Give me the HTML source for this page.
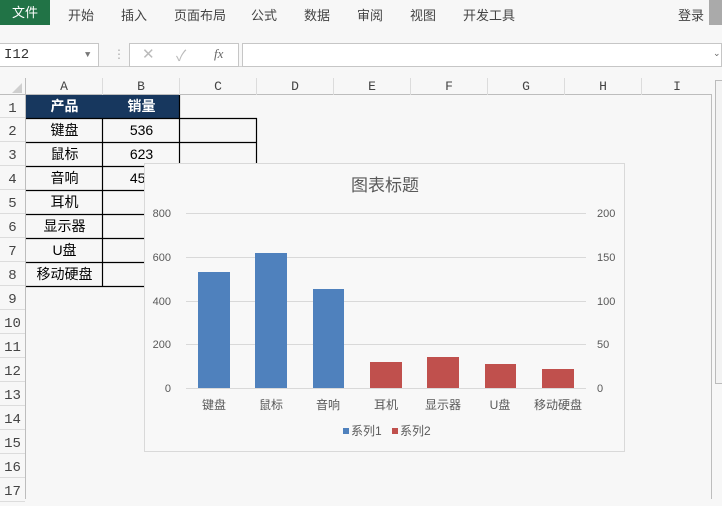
<!DOCTYPE html>
<html><head><meta charset="utf-8"><style>
*{margin:0;padding:0;box-sizing:border-box}
body{width:722px;height:499px;overflow:hidden;background:#f7f7f7;position:relative;font-family:"Liberation Sans","Noto Sans CJK SC",sans-serif;color:#333}
.a{position:absolute}
.tab{position:absolute;top:5px;font-size:13px;color:#444}
.ch{position:absolute;top:78px;height:17px;font:13px "Liberation Mono","Noto Sans CJK SC",monospace;color:#444;text-align:center;border-right:1px solid #dcdcdc;line-height:17px}
.rh{position:absolute;left:0;width:25px;height:24px;font:14px "Liberation Mono",monospace;color:#444;text-align:center;line-height:28px;border-bottom:1px solid #dcdcdc}
.c{position:absolute;height:24px;line-height:24px;text-align:center;font-size:14px;color:#000;font-family:"Liberation Sans","Noto Sans CJK SC",sans-serif}
</style></head><body>
<div class="a" style="left:0;top:0;width:50px;height:25px;background:#217346;color:#fff;font-size:13px;text-align:center;line-height:25px">文件</div>
<div class="tab" style="left:68px">开始</div>
<div class="tab" style="left:121px">插入</div>
<div class="tab" style="left:174px">页面布局</div>
<div class="tab" style="left:251px">公式</div>
<div class="tab" style="left:304px">数据</div>
<div class="tab" style="left:357px">审阅</div>
<div class="tab" style="left:410px">视图</div>
<div class="tab" style="left:463px">开发工具</div>
<div class="tab" style="left:678px">登录</div>
<div class="a" style="left:709px;top:0;width:13px;height:25px;background:#aaa"></div>
<!-- formula bar -->
<div class="a" style="left:0;top:43px;width:722px;height:24px;border-bottom:1px solid #d0d0d0"></div>
<div class="a" style="left:0;top:43px;width:99px;height:24px;border:1px solid #c6c6c6;border-left:none;background:#fff;font:14px 'Liberation Mono',monospace;line-height:22px;padding-left:4px">I12<span style="position:absolute;left:85px;top:0;font-size:9px;color:#777">▼</span></div>
<div class="a" style="left:113px;top:47px;color:#aaa;font-size:12px">⋮</div>
<div class="a" style="left:129px;top:43px;width:110px;height:24px;border:1px solid #c6c6c6;background:#fff"></div>
<div class="a" style="left:142px;top:45px;color:#bbb;font-size:15px">✕</div>
<div class="a" style="left:176px;top:45px;color:#bbb;font-size:15px">✓</div>
<div class="a" style="left:214px;top:46px;color:#666;font:italic 13px 'Liberation Serif',serif">fx</div>
<div class="a" style="left:242px;top:43px;width:480px;height:24px;border:1px solid #c6c6c6;background:#fff"></div>
<div class="a" style="left:713px;top:48px;color:#666;font-size:9px">⌄</div>
<!-- column headers -->
<div class="a" style="left:0;top:94px;width:711px;height:1px;background:#bdbdbd"></div>
<div class="a" style="left:25px;top:78px;width:1px;height:421px;background:#bdbdbd"></div>
<div class="a" style="left:12px;top:83px;width:0;height:0;border-left:10px solid transparent;border-bottom:10px solid #cfcfcf"></div>
<div class="ch" style="left:26px;width:77px">A</div>
<div class="ch" style="left:103px;width:77px">B</div>
<div class="ch" style="left:180px;width:77px">C</div>
<div class="ch" style="left:257px;width:77px">D</div>
<div class="ch" style="left:334px;width:77px">E</div>
<div class="ch" style="left:411px;width:77px">F</div>
<div class="ch" style="left:488px;width:77px">G</div>
<div class="ch" style="left:565px;width:77px">H</div>
<div class="ch" style="left:642px;width:70px;border:none">I</div>
<div class="a" style="left:711px;top:94px;width:1px;height:405px;background:#bdbdbd"></div>
<div class="a" style="left:715px;top:80px;width:7px;height:304px;border:1px solid #bbb;border-right:none;background:#f3f3f3"></div>
<!-- row headers -->
<div class="rh" style="top:95px;height:23px">1</div>
<div class="rh" style="top:118px">2</div>
<div class="rh" style="top:142px">3</div>
<div class="rh" style="top:166px">4</div>
<div class="rh" style="top:190px">5</div>
<div class="rh" style="top:214px">6</div>
<div class="rh" style="top:238px">7</div>
<div class="rh" style="top:262px">8</div>
<div class="rh" style="top:286px">9</div>
<div class="rh" style="top:310px">10</div>
<div class="rh" style="top:334px">11</div>
<div class="rh" style="top:358px">12</div>
<div class="rh" style="top:382px">13</div>
<div class="rh" style="top:406px">14</div>
<div class="rh" style="top:430px">15</div>
<div class="rh" style="top:454px">16</div>
<div class="rh" style="top:478px">17</div>
<!-- table -->
<div class="a" style="left:26px;top:95px;width:154px;height:23px;background:#17375e"></div>
<div class="c" style="left:26px;top:95px;width:77px;height:23px;line-height:23px;color:#fff;font-weight:bold">产品</div>
<div class="c" style="left:103px;top:95px;width:77px;height:23px;line-height:23px;color:#fff;font-weight:bold">销量</div>
<svg class="a" style="left:0;top:0" width="722" height="499">
<g stroke="#000" stroke-width="1.2" fill="none">
<path d="M26 142.5H257M26 166.5H257M26 190.5H257M26 214.5H180M26 238.5H180M26 262.5H180M26 286.5H180M26 118.5H257"/>
<path d="M102.5 118V286M179.5 95V286M256.5 118V166"/>
</g></svg>
<div class="c" style="left:26px;top:118px;width:77px">键盘</div><div class="c" style="left:103px;top:118px;width:77px">536</div>
<div class="c" style="left:26px;top:142px;width:77px">鼠标</div><div class="c" style="left:103px;top:142px;width:77px">623</div>
<div class="c" style="left:26px;top:166px;width:77px">音响</div><div class="c" style="left:103px;top:166px;width:77px">457</div>
<div class="c" style="left:26px;top:190px;width:77px">耳机</div>
<div class="c" style="left:26px;top:214px;width:77px">显示器</div>
<div class="c" style="left:26px;top:238px;width:77px">U盘</div>
<div class="c" style="left:26px;top:262px;width:77px">移动硬盘</div>
<!-- chart -->
<svg class="a" style="left:0;top:0" width="722" height="499" font-family="Liberation Sans,Noto Sans CJK SC,sans-serif">
<rect x="144.5" y="163.5" width="480" height="288" fill="#f8f8f8" stroke="#d9d9d9"/>
<text x="385" y="191" font-size="17" fill="#595959" text-anchor="middle">图表标题</text>
<g stroke="#d9d9d9"><path d="M186 213.5H586M186 257.5H586M186 301.5H586M186 344.5H586M186 388.5H586"/></g>
<g font-size="11" fill="#595959" text-anchor="end">
<text x="171" y="217">800</text><text x="171" y="261">600</text><text x="171" y="305">400</text><text x="171" y="348">200</text><text x="171" y="392">0</text></g>
<g font-size="11" fill="#595959">
<text x="597" y="217">200</text><text x="597" y="261">150</text><text x="597" y="305">100</text><text x="597" y="348">50</text><text x="597" y="392">0</text></g>
<g fill="#4f81bd"><rect x="198" y="272" width="32" height="116"/><rect x="255" y="253" width="32" height="135"/><rect x="313" y="289" width="31" height="99"/></g>
<g fill="#c0504d"><rect x="370" y="362" width="32" height="26"/><rect x="427" y="357" width="32" height="31"/><rect x="485" y="364" width="31" height="24"/><rect x="542" y="369" width="32" height="19"/></g>
<g font-size="12" fill="#595959" text-anchor="middle">
<text x="214" y="409">键盘</text><text x="271" y="409">鼠标</text><text x="328" y="409">音响</text><text x="386" y="409">耳机</text><text x="443" y="409">显示器</text><text x="500" y="409">U盘</text><text x="558" y="409">移动硬盘</text></g>
<rect x="343" y="428" width="6" height="6" fill="#4f81bd"/><text x="351" y="435" font-size="12" fill="#595959">系列1</text>
<rect x="392" y="428" width="6" height="6" fill="#c0504d"/><text x="400" y="435" font-size="12" fill="#595959">系列2</text>
</svg>
</body></html>
